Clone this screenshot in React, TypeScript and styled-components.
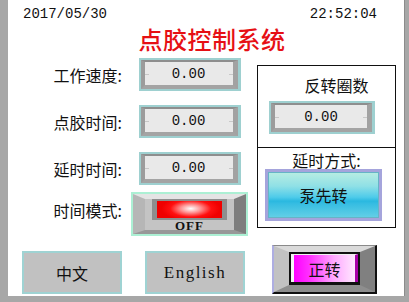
import styled, { createGlobalStyle } from 'styled-components';

const GlobalStyle = createGlobalStyle`
  html, body {
    margin: 0;
    padding: 0;
    background: #a7a7a7;
  }
  body {
    width: 409px;
    height: 302px;
    overflow: hidden;
  }
`;

const CJK = `"Noto Sans CJK SC", "Noto Sans", sans-serif`;
const MONO = `"Liberation Mono", "DejaVu Sans Mono", monospace`;

const Frame = styled.div`
  padding: 0 4px 6px 8px;
`;

const Panel = styled.div`
  width: 397px;
  height: 296px;
  box-sizing: border-box;
  background: #ffffff;
  border-right: 1px solid #8c8c8c;
  display: flex;
  flex-direction: column;
`;

const Header = styled.div`
  display: flex;
  justify-content: space-between;
  padding: 6px 27px 0 15px;
  height: 16px;
  font: 14px/16px ${MONO};
  color: #111;
`;

const Title = styled.h1`
  margin: 3px 0 0;
  padding-left: 12px;
  height: 28px;
  text-align: center;
  font: 500 24px/28px ${CJK};
  color: #e60f14;
  letter-spacing: 0.5px;
`;

const Body = styled.div`
  display: flex;
  gap: 9px;
  margin-top: 5px;
`;

const LeftCol = styled.div`
  display: flex;
  flex-direction: column;
`;

const Row = styled.div<{ $h: number; $mt: number }>`
  display: grid;
  grid-template-columns: 116px 117px;
  column-gap: 7px;
  align-items: center;
  justify-items: center;
  height: ${p => p.$h}px;
  margin-top: ${p => p.$mt}px;
`;

const Label = styled.div<{ $lift?: boolean }>`
  justify-self: end;
  padding-right: 2px;
  padding-bottom: ${p => (p.$lift ? 8 : 0)}px;
  font: 16px/20px ${CJK};
  color: #111;
  white-space: nowrap;
`;

const NumBox = styled.div<{ $w?: number; $ml?: number; $mt?: number }>`
  width: ${p => p.$w ?? 102}px;
  height: 33px;
  margin-left: ${p => p.$ml ?? 0}px;
  margin-top: ${p => p.$mt ?? 0}px;
  box-sizing: border-box;
  padding: 2px 3px 2px 2px;
  background: #9ed0d0;
  display: flex;
`;

const NumField = styled.div`
  flex: 1;
  position: relative;
  box-sizing: border-box;
  border-style: solid;
  border-width: 2px 5px 4px 4px;
  border-color: #8e8e8e #a2a2a2 #a4a4a4 #9c9c9c;
  background: #e9e9e9;
  display: flex;
  align-items: center;
  justify-content: center;
  font: 14px/16px ${MONO};
  color: #111;

  &::before,
  &::after {
    content: '';
    position: absolute;
    top: 50%;
    width: 4px;
    height: 1px;
    background: #c8c8c8;
  }
  &::before { left: 0; }
  &::after { right: 0; }
`;

const Toggle = styled.div`
  width: 117px;
  height: 44px;
  box-sizing: border-box;
  padding: 2px;
  background: #acf0d4;
`;

const ToggleBevel = styled.div`
  height: 100%;
  box-sizing: border-box;
  border-style: solid;
  border-width: 5px 12px 4px 12px;
  border-color: #e4e4e4 #7e7e7e #989898 #b6b6b6;
  background: #c4c4c4;
  display: flex;
  flex-direction: column;
  align-items: center;
`;

const LampFrame = styled.div`
  padding: 2px 5px;
  background: #8e8e8e;
`;

const Lamp = styled.div`
  width: 65px;
  height: 17px;
  background: radial-gradient(ellipse 45% 70% at 52% 45%, #ffffff 0%, #ff9090 35%, #ff1010 70%, #f00000 100%);
`;

const LampText = styled.div`
  font: 700 13px/11px "Liberation Serif", serif;
  letter-spacing: 1px;
  color: #111;
`;

const Box = styled.div`
  margin-top: 7px;
  width: 139px;
  height: 163px;
  box-sizing: border-box;
  border: 1px solid #111;
  display: flex;
  flex-direction: column;
`;

const BoxSection = styled.div<{ $h: number; $divider?: boolean }>`
  height: ${p => p.$h}px;
  border-bottom: ${p => (p.$divider ? '1px solid #111' : 'none')};
  display: flex;
  flex-direction: column;
`;

const BoxText = styled.div<{ $mt: number; $pl: number }>`
  margin-top: ${p => p.$mt}px;
  padding-left: ${p => p.$pl}px;
  text-align: center;
  font: 16px/18px ${CJK};
  color: #111;
`;

const ModeButton = styled.div`
  margin: 0 0 0 7px;
  width: 117px;
  height: 52px;
  box-sizing: border-box;
  padding: 3px;
  background: #a5a4dc;
`;

const ModeFace = styled.div`
  height: 100%;
  box-sizing: border-box;
  border: 1px solid #66b4c6;
  background: linear-gradient(180deg, #b6ece2 0%, #8fe0e6 30%, #4ecbea 55%, #2ab8e0 64%, #36bde2 70%, #62cfe6 100%);
  display: flex;
  align-items: center;
  justify-content: center;
  font: 16px/18px ${CJK};
  color: #111;
`;

const Footer = styled.div`
  display: flex;
  align-items: flex-end;
  margin-top: 9px;
  padding-left: 14px;
  height: 49px;
`;

const LangButton = styled.div<{ $latin?: boolean; $ml: number }>`
  margin-left: ${p => p.$ml}px;
  width: 100px;
  height: 43px;
  box-sizing: border-box;
  border: 2px solid #9fd3d3;
  background: #c1c1c1;
  display: flex;
  align-items: center;
  justify-content: center;
  font: ${p => (p.$latin ? `17px/20px "Liberation Serif", serif` : `16px/18px ${CJK}`)};
  letter-spacing: ${p => (p.$latin ? '1.5px' : '0')};
  color: #111;
`;

const RunOuter = styled.div`
  margin-left: 27px;
  width: 105px;
  height: 49px;
  box-sizing: border-box;
  border-style: solid;
  border-width: 1px 2px 2px 2px;
  border-color: #8a8a8a #111 #111 #aeaee2;
`;

const RunBevel = styled.div`
  height: 100%;
  box-sizing: border-box;
  border-style: solid;
  border-width: 6px 15px 7px 15px;
  border-color: #dadada #808080 #8e8e8e #c2c2c2;
  background: #b0b0b0;
  display: flex;
`;

const RunFace = styled.div`
  flex: 1;
  box-sizing: border-box;
  border: 2px solid #111;
  border-bottom-width: 3px;
  display: flex;
`;

const RunInner = styled.div`
  flex: 1;
  box-sizing: border-box;
  border-left: 3px solid #f4f4f4;
  border-right: 3px solid #a800a8;
  border-top: 1px solid #f0f0f0;
  background: linear-gradient(90deg, #ff00ff 0%, #ff30ff 25%, #ffa8ff 65%, #ffe8ff 100%);
  display: flex;
  align-items: center;
  justify-content: center;
  font: 16px/18px ${CJK};
  color: #111;
`;

const fields = [
  { label: '工作速度:', value: '0.00', mt: 0 },
  { label: '点胶时间:', value: '0.00', mt: 14 },
  { label: '延时时间:', value: '0.00', mt: 14 },
];

export default function App() {
  return (
    <>
      <GlobalStyle />
      <Frame>
        <Panel>
          <Header>
            <span>2017/05/30</span>
            <span>22:52:04</span>
          </Header>
          <Title>点胶控制系统</Title>
          <Body>
            <LeftCol>
              {fields.map(f => (
                <Row key={f.label} $h={33} $mt={f.mt}>
                  <Label>{f.label}</Label>
                  <NumBox>
                    <NumField>{f.value}</NumField>
                  </NumBox>
                </Row>
              ))}
              <Row $h={44} $mt={7}>
                <Label $lift>时间模式:</Label>
                <Toggle>
                  <ToggleBevel>
                    <LampFrame>
                      <Lamp />
                    </LampFrame>
                    <LampText>OFF</LampText>
                  </ToggleBevel>
                </Toggle>
              </Row>
            </LeftCol>
            <Box>
              <BoxSection $h={81} $divider>
                <BoxText $mt={10} $pl={20}>反转圈数</BoxText>
                <NumBox $w={106} $ml={11} $mt={7}>
                  <NumField>0.00</NumField>
                </NumBox>
              </BoxSection>
              <BoxSection $h={80}>
                <BoxText $mt={3} $pl={0}>延时方式:</BoxText>
                <ModeButton>
                  <ModeFace>泵先转</ModeFace>
                </ModeButton>
              </BoxSection>
            </Box>
          </Body>
          <Footer>
            <LangButton $ml={0}>中文</LangButton>
            <LangButton $ml={23} $latin>English</LangButton>
            <RunOuter>
              <RunBevel>
                <RunFace>
                  <RunInner>正转</RunInner>
                </RunFace>
              </RunBevel>
            </RunOuter>
          </Footer>
        </Panel>
      </Frame>
    </>
  );
}
